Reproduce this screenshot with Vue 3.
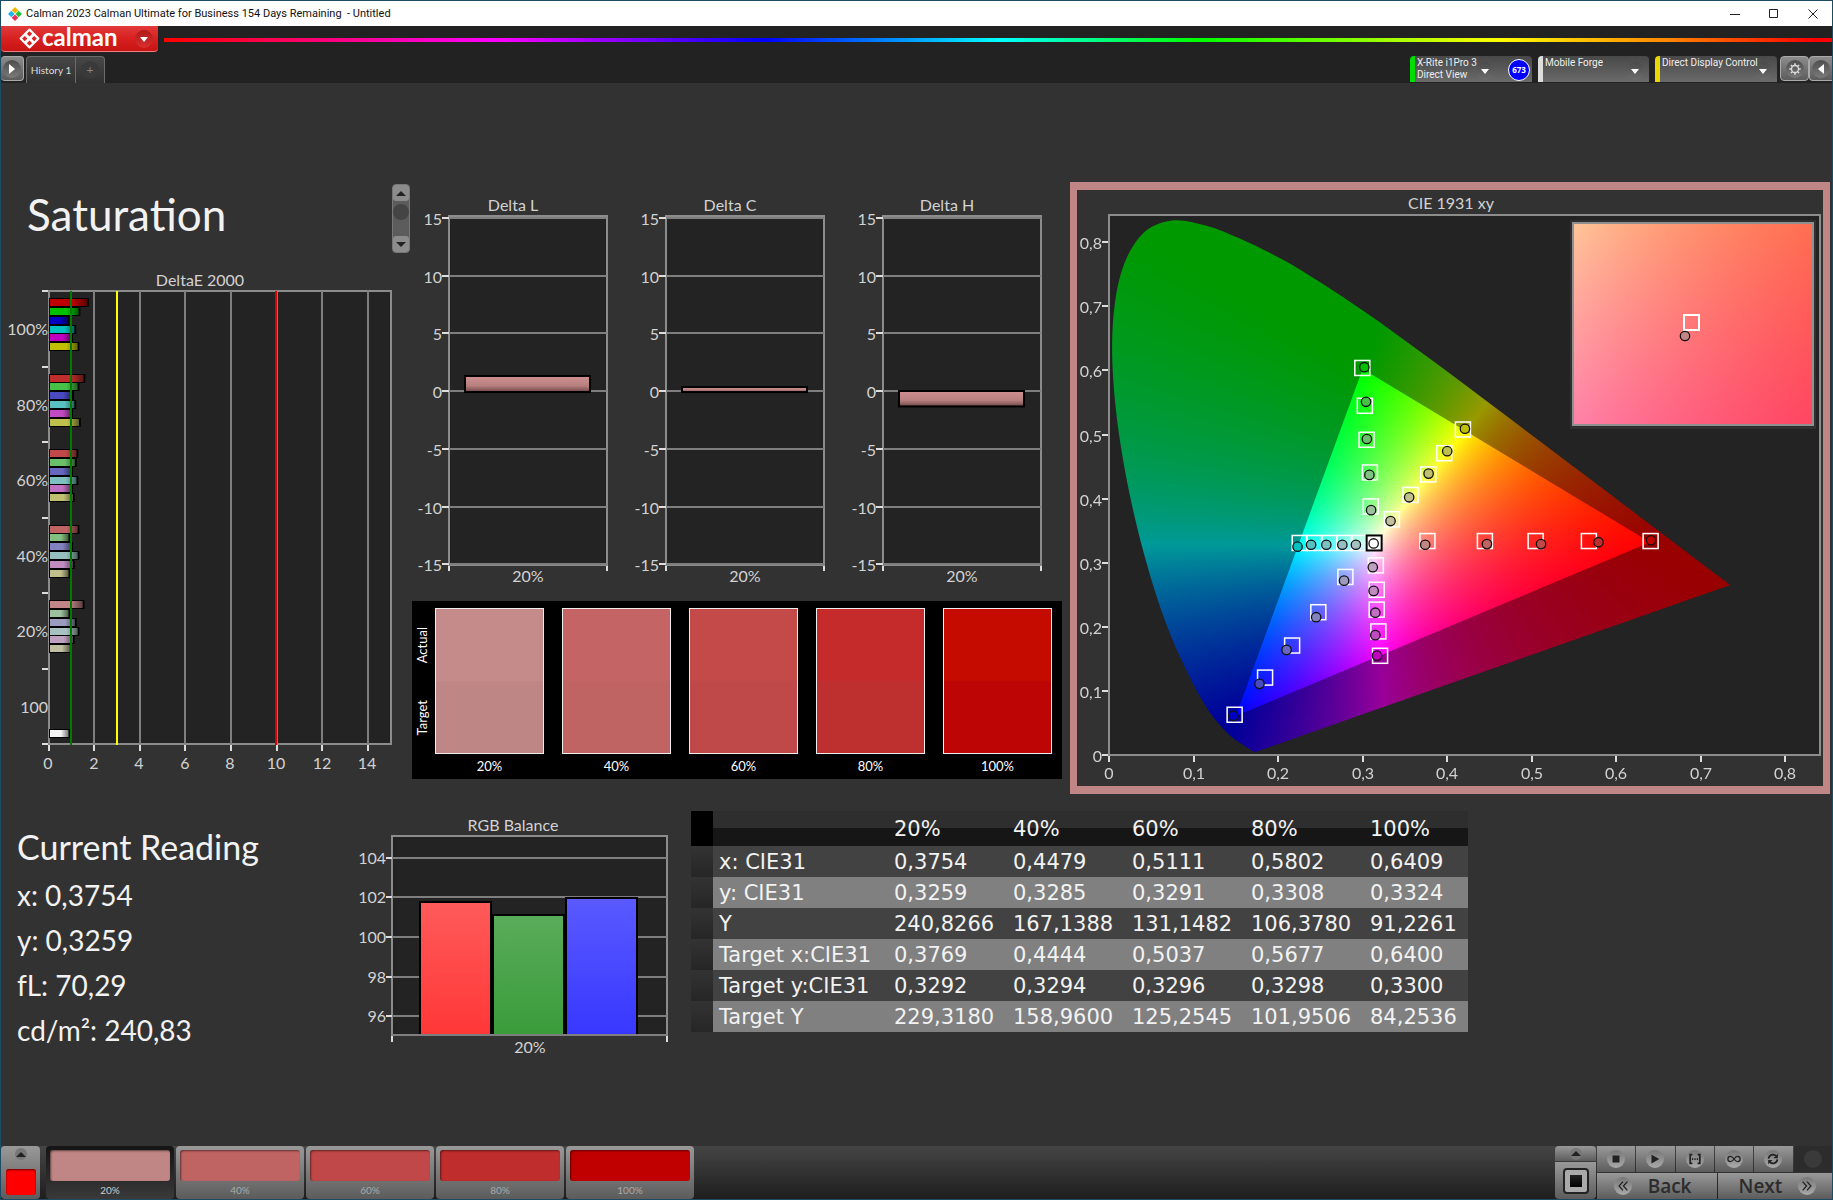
<script setup>
import { onMounted, ref } from 'vue'

const levels = ['20%', '40%', '60%', '80%', '100%']
const masks = {
  red: [1, 0, 0],
  green: [0, 1, 0],
  blue: [0, 0, 1],
  cyan: [0, 1, 1],
  magenta: [1, 0, 1],
  yellow: [1, 1, 0],
}
/* value of the unlit channels at each saturation level */
const lows = {
  red: [133, 99, 72, 45, 0],
  green: [155, 130, 105, 70, 0],
  blue: [155, 130, 103, 73, 0],
  cyan: [167, 150, 125, 88, 0],
  magenta: [160, 140, 112, 75, 0],
  yellow: [160, 138, 112, 78, 0],
}
const hues = ['red', 'green', 'blue', 'cyan', 'magenta', 'yellow']

function shade(hue, level) {
  const rgb = masks[hue].map((on) => (on ? 192 : lows[hue][levels.indexOf(level)]))
  return `rgb(${rgb.join(',')})`
}

const swatches = [
  { label: '20%', actual: '#c58a8a', target: '#bf8686' },
  { label: '40%', actual: '#c46464', target: '#bf6363' },
  { label: '60%', actual: '#c44949', target: '#bf4949' },
  { label: '80%', actual: '#c52b2b', target: '#be2f2f' },
  { label: '100%', actual: '#c50a00', target: '#bd0505' },
]

/* DeltaE 2000 chart */
const DE = { left: 48, top: 21, unit: 22.8, pitch: 75.5 }
const deltaE = [
  { label: '100%', values: [1.7, 1.33, 0.86, 1.15, 1.01, 1.29] },
  { label: '80%', values: [1.55, 1.29, 1.05, 1.15, 1.01, 1.35] },
  { label: '60%', values: [1.24, 1.17, 1.01, 1.24, 1.01, 1.08] },
  { label: '40%', values: [1.29, 0.89, 1.01, 1.29, 1.08, 0.89] },
  { label: '20%', values: [1.51, 0.89, 1.17, 1.29, 1.08, 0.95] },
]
const deBars = deltaE.flatMap((g, gi) =>
  g.values.map((v, i) => ({
    y: Math.round(DE.top + gi * DE.pitch + 8 + i * 8.85),
    w: v * DE.unit,
    fill: shade(hues[i], g.label),
  })),
)
deBars.push({ y: 460, w: 0.89 * DE.unit, fill: '#f4f4f4' })
const deLabels = [...deltaE.map((g) => g.label), '100']

/* Delta L / C / H charts */
const deltaCharts = [
  { title: 'Delta L', value: 1.3 },
  { title: 'Delta C', value: 0.35 },
  { title: 'Delta H', value: -1.25 },
]
const deltaTicks = [15, 10, 5, 0, -5, -10, -15]
const dy = (v) => Math.round(209 - v * 11.55)

/* RGB balance chart */
const balance = [
  { x: 70, h: 133, fill: 'url(#balRed)' },
  { x: 143, h: 120, fill: 'url(#balGreen)' },
  { x: 216, h: 137, fill: 'url(#balBlue)' },
]
const by = (v) => Math.round(126 - (v - 100) * 19.8)

/* CIE chart */
const CX = (x) => 32 + x * 845.5
const CY = (y) => 565 - y * 641
const cieTicks = [0, 1, 2, 3, 4, 5, 6, 7, 8]
const tickLabel = (t) => (t ? `0,${t}` : '0')
const targets = [
  [0.299, 0.603], [0.302, 0.544], [0.304, 0.491], [0.308, 0.44], [0.309, 0.387],
  [0.418, 0.507], [0.396, 0.47], [0.377, 0.437], [0.356, 0.405], [0.334, 0.367],
  [0.376, 0.333], [0.444, 0.333], [0.504, 0.333], [0.567, 0.333], [0.64, 0.333],
  [0.225, 0.33], [0.242, 0.33], [0.26, 0.33], [0.278, 0.33], [0.295, 0.33],
  [0.315, 0.295], [0.316, 0.257], [0.316, 0.226], [0.318, 0.192], [0.32, 0.154],
  [0.279, 0.277], [0.247, 0.222], [0.216, 0.17], [0.184, 0.12], [0.148, 0.062],
]
const measured = {
  green: [[0.31, 0.382], [0.308, 0.437], [0.305, 0.493], [0.304, 0.551], [0.302, 0.605]],
  yellow: [[0.333, 0.365], [0.355, 0.402], [0.378, 0.439], [0.4, 0.474], [0.421, 0.509]],
  red: [[0.374, 0.328], [0.447, 0.329], [0.511, 0.329], [0.579, 0.332], [0.641, 0.335]],
  cyan: [[0.292, 0.328], [0.276, 0.328], [0.257, 0.328], [0.239, 0.328], [0.223, 0.325]],
  magenta: [[0.312, 0.293], [0.313, 0.256], [0.315, 0.222], [0.315, 0.187], [0.317, 0.155]],
  blue: [[0.278, 0.272], [0.245, 0.215], [0.21, 0.164], [0.178, 0.111], [0.147, 0.061]],
}
const readings = Object.entries(measured).flatMap(([hue, pts]) =>
  pts.map(([x, y], i) => ({ x, y, fill: shade(hue, levels[i]) })),
)

const locus = [
  [0.1741, 0.005], [0.1714, 0.0051], [0.1689, 0.0069], [0.1644, 0.0109], [0.1566, 0.0177],
  [0.144, 0.0297], [0.1241, 0.0578], [0.1096, 0.0868], [0.0913, 0.1327], [0.0687, 0.2007],
  [0.0454, 0.295], [0.0235, 0.4127], [0.0082, 0.5384], [0.0039, 0.6548], [0.0139, 0.7502],
  [0.0389, 0.812], [0.0743, 0.8338], [0.1142, 0.8262], [0.1547, 0.8059], [0.1929, 0.7816],
  [0.2296, 0.7543], [0.3016, 0.6923], [0.3731, 0.6245], [0.4441, 0.5547], [0.5125, 0.4866],
  [0.5752, 0.4242], [0.627, 0.3725], [0.6658, 0.334], [0.6915, 0.3083], [0.719, 0.2809],
  [0.7347, 0.2653],
]
const gamut = [[0.64, 0.332], [0.3, 0.602], [0.15, 0.061]]

const cieCanvas = ref(null)
const insetCanvas = ref(null)

function chroma(x, y, gain) {
  const yy = Math.max(y, 0.001)
  const X = x / yy
  const Z = (1 - x - y) / yy
  const rgb = [
    3.2406 * X - 1.5372 - 0.4986 * Z,
    -0.9689 * X + 1.8758 + 0.0415 * Z,
    0.0557 * X - 0.204 + 1.057 * Z,
  ].map((c) => Math.max(c, 0))
  const peak = Math.max(...rgb, 0.0001)
  return rgb.map((c) => (c / peak) * 255 * gain)
}

function field(w, h, toXY, gain) {
  const layer = document.createElement('canvas')
  layer.width = w
  layer.height = h
  const ctx = layer.getContext('2d')
  const img = ctx.createImageData(w, h)
  for (let j = 0; j < h; j++) {
    for (let i = 0; i < w; i++) {
      const [x, y] = toXY(i, j)
      const [r, g, b] = chroma(x, y, gain)
      const o = (j * w + i) * 4
      img.data[o] = r
      img.data[o + 1] = g
      img.data[o + 2] = b
      img.data[o + 3] = 255
    }
  }
  ctx.putImageData(img, 0, 0)
  return layer
}

onMounted(() => {
  const c = cieCanvas.value
  const ctx = c.getContext('2d')
  const px = ([x, y]) => [x * 845.5, c.height - y * 641]
  const toXY = (i, j) => [i / 845.5, (c.height - j) / 641]

  ctx.save()
  ctx.beginPath()
  const pts = locus.map(px)
  ctx.moveTo(...pts[0])
  for (let i = 0; i < pts.length - 1; i++) {
    const p0 = pts[Math.max(i - 1, 0)]
    const p1 = pts[i]
    const p2 = pts[i + 1]
    const p3 = pts[Math.min(i + 2, pts.length - 1)]
    ctx.bezierCurveTo(
      p1[0] + (p2[0] - p0[0]) / 6, p1[1] + (p2[1] - p0[1]) / 6,
      p2[0] - (p3[0] - p1[0]) / 6, p2[1] - (p3[1] - p1[1]) / 6,
      p2[0], p2[1],
    )
  }
  ctx.closePath()
  ctx.clip()
  ctx.drawImage(field(c.width, c.height, toXY, 0.6), 0, 0)
  ctx.restore()

  ctx.save()
  ctx.beginPath()
  gamut.map(px).forEach((p, i) => (i ? ctx.lineTo(...p) : ctx.moveTo(...p)))
  ctx.closePath()
  ctx.clip()
  ctx.drawImage(field(c.width, c.height, toXY, 1), 0, 0)
  ctx.restore()

  const n = insetCanvas.value
  const near = (i, j) => [
    0.3769 + (i - n.width / 2) / 4200,
    0.3292 - (j - n.height / 2) / 4100,
  ]
  n.getContext('2d').drawImage(field(n.width, n.height, near, 1), 0, 0)
})

const tableRows = [
  ['x: CIE31', '0,3754', '0,4479', '0,5111', '0,5802', '0,6409'],
  ['y: CIE31', '0,3259', '0,3285', '0,3291', '0,3308', '0,3324'],
  ['Y', '240,8266', '167,1388', '131,1482', '106,3780', '91,2261'],
  ['Target x:CIE31', '0,3769', '0,4444', '0,5037', '0,5677', '0,6400'],
  ['Target y:CIE31', '0,3292', '0,3294', '0,3296', '0,3298', '0,3300'],
  ['Target Y', '229,3180', '158,9600', '125,2545', '101,9506', '84,2536'],
]
const current = ['x: 0,3754', 'y: 0,3259', 'fL: 70,29', 'cd/m²: 240,83']
</script>

<template>
  <div class="window">
    <header class="titlebar">
      <svg class="app-icon" viewBox="0 0 14 14" aria-hidden="true">
        <path d="M7 0l3.300 3.300L7 6.600 3.700 3.300z" fill="#f7b500" />
        <path d="M3.300 3.700L6.600 7l-3.300 3.300L0 7z" fill="#18b7e8" />
        <path d="M10.700 3.700L14 7l-3.300 3.300L7.400 7z" fill="#1fc23a" />
        <path d="M7 7.400l3.300 3.300L7 14l-3.300-3.300z" fill="#ee2b5b" />
      </svg>
      <h1>Calman 2023 Calman Ultimate for Business 154 Days Remaining&nbsp; - Untitled</h1>
      <div class="controls">
        <button aria-label="Minimize"><svg viewBox="0 0 10 10"><path d="M0 5.500h10" /></svg></button>
        <button aria-label="Maximize"><svg viewBox="0 0 10 10"><path d="M.5.5h8v8h-8z" /></svg></button>
        <button aria-label="Close"><svg viewBox="0 0 10 10"><path d="M.5.5l9 9m0-9l-9 9" /></svg></button>
      </div>
    </header>

    <div class="brandbar">
      <button class="brand">
        <svg class="mark" viewBox="0 0 20 20" aria-hidden="true">
          <path d="M10 1.500L18.500 10 10 18.500 1.500 10z" fill="#fff" stroke="#fff" stroke-width="2" stroke-linejoin="round" />
          <g fill="#d22">
            <path d="M10 3l2.500 2.500L10 8 7.500 5.500z" />
            <path d="M5.500 7.500L8 10l-2.500 2.500L3 10z" />
            <path d="M14.500 7.500L17 10l-2.500 2.500L12 10z" />
            <path d="M10 12l2.500 2.500L10 17l-2.500-2.500z" />
          </g>
        </svg>
        <span>calman</span>
        <i class="drop red"></i>
      </button>
      <div class="rainbow"></div>
    </div>

    <nav class="tabs">
      <button class="square" aria-label="Expand"><i class="knob"><b class="tri right"></b></i></button>
      <button class="tab">History 1</button>
      <button class="tab add" aria-label="Add history"><i class="knob dim">+</i></button>
      <div class="devices">
        <div class="device meter">
          <span>X-Rite i1Pro 3<br />Direct View</span>
          <button class="drop" aria-label="Meter menu"></button>
          <em>673</em>
        </div>
        <div class="device source">
          <span>Mobile Forge</span>
          <button class="drop" aria-label="Source menu"></button>
        </div>
        <div class="device display">
          <span>Direct Display Control</span>
          <button class="drop" aria-label="Display menu"></button>
        </div>
        <button class="square gear" aria-label="Settings">
          <i class="knob">
            <svg viewBox="0 0 16 16"><circle cx="8" cy="8" r="4" fill="none" stroke="#ddd" stroke-width="1.500" /><path d="M8 1.500v2M8 12.500v2M1.500 8h2M12.500 8h2M3.400 3.400l1.400 1.400M11.200 11.200l1.400 1.400M3.400 12.600l1.400-1.400M11.200 4.800l1.400-1.400" stroke="#ddd" stroke-width="1.800" /></svg>
          </i>
        </button>
        <button class="square last" aria-label="Collapse"><i class="knob"><b class="tri left"></b></i></button>
      </div>
    </nav>

    <main>
      <section class="upper">
        <div class="col-a">
          <div class="heading">
            <h2>Saturation</h2>
            <div class="scroller">
              <button aria-label="Scroll up"><b class="tri up"></b></button>
              <i></i>
              <button aria-label="Scroll down"><b class="tri down"></b></button>
            </div>
          </div>
          <svg class="chart" viewBox="0 0 411 512">
            <defs>
              <linearGradient id="barFade"><stop offset="0.6" stop-opacity="0" /><stop offset="1" stop-opacity="0.5" /></linearGradient>
            </defs>
            <text x="199" y="16" text-anchor="middle">DeltaE 2000</text>
            <rect class="plot" :x="DE.left" :y="DE.top" width="342" height="453" />
            <path v-for="t in 7" :key="t" class="grid" :d="`M${Math.floor(DE.left + t * 45.6)} 21V474`" />
            <path v-for="t in 8" :key="'x' + t" class="tick" :d="`M${Math.floor(DE.left + (t - 1) * 45.6)} 475v6`" />
            <path v-for="t in 7" :key="'y' + t" class="tick" :d="`M41 ${Math.round(DE.top + (t - 1) * DE.pitch)}h6`" />
            <g v-for="(b, i) in deBars" :key="i">
              <rect x="48" :y="b.y - 1" :width="b.w + 1" height="9" fill="#000" />
              <rect x="49" :y="b.y" :width="b.w - 2" height="7" :fill="b.fill" />
              <rect x="49" :y="b.y" :width="b.w - 2" height="7" fill="url(#barFade)" />
            </g>
            <path d="M70 21V475" stroke="#007a00" stroke-width="2" />
            <path d="M116 21V475" stroke="#ff0" stroke-width="2" />
            <path d="M275 21V475" stroke="#e00000" stroke-width="2" />
            <text v-for="(l, i) in deLabels" :key="'l' + i" x="47" :y="Math.round(65 + i * DE.pitch)" text-anchor="end">{{ l }}</text>
            <text v-for="t in 8" :key="'n' + t" :x="Math.round(47 + (t - 1) * 45.6)" y="499" text-anchor="middle">{{ (t - 1) * 2 }}</text>
          </svg>
        </div>

        <div class="col-b">
          <div class="deltas">
            <svg v-for="c in deltaCharts" :key="c.title" class="chart" viewBox="0 0 217 419">
              <defs>
                <linearGradient id="pinkFade" x2="0" y2="1"><stop offset="0" stop-color="#cf9090" /><stop offset="0.6" stop-color="#b98080" /><stop offset="1" stop-color="#6d4646" /></linearGradient>
              </defs>
              <text x="101" y="29" text-anchor="middle">{{ c.title }}</text>
              <rect class="plot" x="37" y="34" width="158" height="349" />
              <path v-for="t in deltaTicks" :key="t" class="grid" :d="`M37 ${dy(t)}H195`" />
              <path v-for="t in deltaTicks" :key="'t' + t" class="tick" :d="`M30 ${dy(t)}h7`" />
              <path class="tick" d="M37 384v5M195 384v5" />
              <rect x="53" :y="dy(Math.max(c.value, 0))" width="125" :height="Math.abs(c.value) * 11.55 + 1" fill="url(#pinkFade)" stroke="#000" stroke-width="2" />
              <text v-for="t in deltaTicks" :key="'l' + t" x="30" :y="dy(t) + 7" text-anchor="end">{{ t }}</text>
              <text x="116" y="400" text-anchor="middle">20%</text>
            </svg>
          </div>
          <div class="swatches">
            <div class="side"><span>Actual</span><span>Target</span></div>
            <figure v-for="s in swatches" :key="s.label">
              <div class="patch"><i :style="{ background: s.actual }"></i><i :style="{ background: s.target }"></i></div>
              <figcaption>{{ s.label }}</figcaption>
            </figure>
          </div>
        </div>

        <div class="cie">
          <svg class="chart" viewBox="0 0 746 596">
            <text x="374" y="19" text-anchor="middle">CIE 1931 xy</text>
            <rect class="plot" x="32" y="25" width="711" height="540" />
            <foreignObject x="32" y="25" width="711" height="540">
              <canvas ref="cieCanvas" width="711" height="540"></canvas>
            </foreignObject>
            <rect x="32" y="25" width="711" height="540" fill="none" stroke="#8c8c8c" stroke-width="2" />
            <path v-for="t in cieTicks" :key="t" class="tick" :d="`M${Math.round(CX(t / 10))} 566v6M25 ${Math.round(CY(t / 10))}h6`" />
            <text v-for="t in cieTicks" :key="'x' + t" :x="Math.round(CX(t / 10))" y="589" text-anchor="middle">{{ tickLabel(t) }}</text>
            <text v-for="t in cieTicks" :key="'y' + t" x="25" :y="Math.round(CY(t / 10)) + 7" text-anchor="end">{{ tickLabel(t) }}</text>
            <rect v-for="(p, i) in targets" :key="'s' + i" :x="CX(p[0]) - 7" :y="CY(p[1]) - 8" width="15" height="15" fill="none" stroke="#fff" stroke-width="1.500" />
            <circle v-for="(p, i) in readings" :key="'c' + i" :cx="CX(p.x)" :cy="CY(p.y)" r="4.700" :fill="p.fill" stroke="#111" stroke-width="1.300" />
            <rect :x="CX(0.313) - 7" :y="CY(0.33) - 8" width="15" height="15" fill="#fff" stroke="#000" stroke-width="2" />
            <circle :cx="CX(0.313)" :cy="CY(0.33)" r="4.700" fill="#fff" stroke="#111" stroke-width="1.300" />
            <rect x="493" y="30" width="246" height="209" fill="#303030" />
            <foreignObject x="496" y="33" width="240" height="202">
              <canvas ref="insetCanvas" width="240" height="202"></canvas>
            </foreignObject>
            <rect x="496" y="33" width="240" height="202" fill="none" stroke="#909090" stroke-width="2" />
            <rect x="607" y="125" width="15" height="15" fill="none" stroke="#fff" stroke-width="2" />
            <circle cx="608" cy="146" r="4.700" fill="#c08585" stroke="#111" stroke-width="1.300" />
          </svg>
        </div>
      </section>

      <section class="lower">
        <div class="reading">
          <h3>Current Reading</h3>
          <p v-for="r in current" :key="r">{{ r }}</p>
        </div>
        <svg class="chart" viewBox="0 0 341 250">
          <defs>
            <linearGradient id="balRed" x2="0" y2="1"><stop offset="0" stop-color="#ff5a5a" /><stop offset="1" stop-color="#ff3737" /></linearGradient>
            <linearGradient id="balGreen" x2="0" y2="1"><stop offset="0" stop-color="#5aac5a" /><stop offset="1" stop-color="#3a9c3a" /></linearGradient>
            <linearGradient id="balBlue" x2="0" y2="1"><stop offset="0" stop-color="#5a5aff" /><stop offset="1" stop-color="#3737ff" /></linearGradient>
          </defs>
          <text x="163" y="20" text-anchor="middle">RGB Balance</text>
          <rect class="plot" x="42" y="25" width="275" height="199" />
          <path v-for="t in [104, 102, 100, 98, 96]" :key="t" class="grid" :d="`M42 ${by(t)}H317`" />
          <path v-for="t in [104, 102, 100, 98, 96]" :key="'t' + t" class="tick" :d="`M36 ${by(t)}h6`" />
          <rect v-for="b in balance" :key="b.x" :x="b.x" :y="224 - b.h" width="71" :height="b.h" :fill="b.fill" stroke="#000" stroke-width="2" />
          <path class="grid" d="M42 224H317" />
          <path class="tick" d="M42 225v6M317 225v6" />
          <text v-for="t in [104, 102, 100, 98, 96]" :key="'l' + t" x="36" :y="by(t) + 6" text-anchor="end">{{ t }}</text>
          <text x="180" y="242" text-anchor="middle">20%</text>
        </svg>
        <table>
          <colgroup><col class="c-gutter" /><col class="c-name" /><col v-for="n in 4" :key="n" class="c-value" /><col /></colgroup>
          <thead>
            <tr><td class="gutter"></td><td></td><th v-for="l in levels" :key="l" scope="col">{{ l }}</th></tr>
          </thead>
          <tbody>
            <tr v-for="r in tableRows" :key="r[0]">
              <td class="gutter"></td>
              <th scope="row">{{ r[0] }}</th>
              <td v-for="(v, i) in r.slice(1)" :key="i">{{ v }}</td>
            </tr>
          </tbody>
        </table>
      </section>
    </main>

    <footer>
      <button class="current" aria-label="Current color"><i class="mini"><b class="tri up"></b></i><span></span></button>
      <div class="steps">
        <button v-for="(l, i) in levels" :key="l" :class="{ active: i === 0 }">
          <i :style="{ background: shade('red', l) }"></i>{{ l }}
        </button>
      </div>
      <div class="halt">
        <button aria-label="Show options"><i class="mini"><b class="tri up"></b></i></button>
        <button class="big" aria-label="Pattern"><span></span></button>
      </div>
      <div class="transport">
        <div class="row">
          <button aria-label="Stop"><i class="knob"><svg viewBox="0 0 16 16"><path d="M4 4h8v8H4z" /></svg></i></button>
          <button aria-label="Play"><i class="knob"><svg viewBox="0 0 16 16"><path d="M4 3l9 5-9 5z" /></svg></i></button>
          <button aria-label="Read series"><i class="knob"><svg viewBox="0 0 16 16"><path class="line thick" d="M5 3H2.500v10H5M11 3h2.500v10H11M4.500 8H6M7.300 8h1.500M10 8h1.500" /></svg></i></button>
          <button aria-label="Continuous"><i class="knob"><svg viewBox="0 0 16 16"><path class="line" d="M8 8C6.500 5.800 5.500 5 4 5a3 3 0 000 6C5.500 11 6.500 10.200 8 8s2.500-3 4-3a3 3 0 010 6C10.500 11 9.500 10.200 8 8z" /></svg></i></button>
          <button aria-label="Refresh"><i class="knob"><svg viewBox="0 0 16 16"><path class="line thick" d="M3 7.500A5 5 0 0111.500 4.500M13 8.500A5 5 0 014.500 11.500" /><path d="M13.500 2v5H8.500zM2.500 14V9h5z" /></svg></i></button>
          <button class="off" aria-label="Record" disabled><i class="knob"></i></button>
        </div>
        <div class="row nav">
          <button><i class="knob"><svg viewBox="0 0 16 16"><path class="line" d="M8 3L3.500 8 8 13M13 3L8.500 8l4.500 5" /></svg></i>Back</button>
          <button>Next<i class="knob"><svg viewBox="0 0 16 16"><path class="line" d="M8 3l4.500 5L8 13M3 3l4.500 5L3 13" /></svg></i></button>
        </div>
      </div>
    </footer>
  </div>
</template>

<style>
body {
  margin: 0;
  background: #323232;
}
</style>

<style scoped>
* {
  box-sizing: border-box;
}
button {
  border: 0;
  padding: 0;
  margin: 0;
  background: none;
  color: inherit;
  font: inherit;
  cursor: pointer;
}
h1, h2, h3, p, figure {
  margin: 0;
  font-weight: 400;
}
i, em {
  font-style: normal;
}
.window {
  display: flex;
  flex-direction: column;
  min-height: 100vh;
  background: #323232;
  border: 1px solid #1f4a63;
  color: #f2f2f2;
  font-family: Lato, "Liberation Sans", sans-serif;
}

.titlebar {
  display: flex;
  align-items: center;
  height: 25px;
  padding: 0 14px 0 7px;
  background: #fff;
  color: #111;
}
.titlebar h1 {
  font: 11px/16px Roboto, Lato, sans-serif;
}
.app-icon {
  width: 14px;
  height: 14px;
  margin-right: 4px;
}
.controls {
  display: flex;
  gap: 29px;
  margin-left: auto;
}
.controls svg {
  display: block;
  width: 10px;
  height: 10px;
  fill: none;
  stroke: #222;
}

.brandbar {
  display: flex;
  gap: 6px;
  height: 30px;
  background: #222;
}
.brand {
  display: flex;
  align-items: center;
  width: 157px;
  height: 26px;
  padding: 0 5px 0 18px;
  border-radius: 0 0 4px 4px;
  border-bottom: 1px solid #f08080;
  background: linear-gradient(#e23a3a, #d82020 50%, #c81414);
  color: #fff;
}
.brand span {
  flex: 1;
  font: 700 24px/24px Lato, sans-serif;
  text-align: left;
  margin: -3px 0 0 2px;
}
.mark {
  width: 21px;
  height: 21px;
}
.rainbow {
  flex: 1;
  height: 4px;
  margin-top: 12px;
  background: linear-gradient(90deg, #f00, #f0f 20%, #00f 36%, #0ff 50%, #0f0 62%, #ff0 80%, #f80 90%, #f00 99%);
}

.drop {
  position: relative;
  flex: none;
  width: 18px;
  height: 18px;
  border-radius: 50%;
  background: linear-gradient(#4a4a4a, #6c6c6c);
}
.drop.red {
  background: linear-gradient(#b01818, #d83030);
}
.drop::after {
  content: "";
  position: absolute;
  left: 5px;
  top: 7px;
  border: 4px solid transparent;
  border-top: 5px solid #fff;
  border-bottom: 0;
}

.tabs {
  display: flex;
  height: 27px;
  background: #222;
  font-size: 11px;
  line-height: 12px;
}
.square {
  display: grid;
  place-items: center;
  width: 23px;
  height: 25px;
  border: 1px solid #aaa;
  border-radius: 4px;
  background: linear-gradient(#8c8c8c, #5c5c5c);
}
.tabs > .square {
  border-left: 0;
  margin-right: 2px;
}
.knob {
  display: grid;
  place-items: center;
  width: 18px;
  height: 18px;
  border-radius: 50%;
  background: linear-gradient(#4e4e4e, #7a7a7a);
}
.knob svg {
  width: 14px;
  height: 14px;
}
.knob.dim {
  background: #3a3a3a;
  color: #888;
  font-size: 12px;
}
.tri {
  width: 0;
  height: 0;
  border: 5px solid transparent;
}
.tri.right {
  border-left: 6px solid #fff;
  border-right: 0;
}
.tri.left {
  border-right: 6px solid #fff;
  border-left: 0;
}
.tri.up {
  border-bottom: 5px solid #222;
  border-top: 0;
}
.tri.down {
  border-top: 5px solid #222;
  border-bottom: 0;
}
.tab {
  display: grid;
  place-items: center;
  width: 50px;
  border: 1px solid #6c6c6c;
  border-bottom: 0;
  border-radius: 4px 0 0 0;
  background: linear-gradient(#484848, #303030);
  color: #ddd;
  font-size: 10px;
}
.tab.add {
  width: 29px;
  border-left: 0;
  border-radius: 0 4px 0 0;
}
.devices {
  display: flex;
  margin-left: auto;
}
.device {
  display: flex;
  height: 26px;
  padding: 1px 0 0 2px;
  border-left: 5px solid;
  border-radius: 4px 4px 0 0;
  background: linear-gradient(#484848, #6a6a6a);
  color: #eee;
  font: 10px/12px Roboto, Lato, sans-serif;
}
.device span {
  position: relative;
  z-index: 1;
  flex: 1;
  min-width: 0;
  white-space: nowrap;
}
.device .drop {
  margin: 5px 5px 0 0;
}
.meter {
  width: 122px;
  border-color: #0d0;
  margin-right: 6px;
}
.meter em {
  align-self: center;
  width: 22px;
  height: 22px;
  margin: 0 2px 0 9px;
  border: 1px solid #fff;
  border-radius: 50%;
  background: #00f;
  color: #fff;
  font: 700 8px/20px "Open Sans", sans-serif;
  text-align: center;
}
.source {
  width: 111px;
  border-color: #ddd;
  margin-right: 6px;
}
.display {
  width: 122px;
  border-color: #e8d800;
  margin-right: 3px;
}
.gear {
  width: 29px;
}
.last {
  width: 23px;
  border-right: 0;
  border-radius: 4px 0 0 4px;
}

main {
  display: flex;
  flex-direction: column;
  gap: 17px;
  padding: 99px 0 24px;
}
.chart {
  display: block;
  width: 100%;
  height: auto;
}
.chart text {
  fill: #d2d2d2;
  font-size: 16px;
}
.chart canvas {
  display: block;
}
.plot {
  fill: #232323;
  stroke: #8c8c8c;
  stroke-width: 2px;
}
.grid {
  fill: none;
  stroke: #7e7e7e;
  stroke-width: 2px;
}
.tick {
  fill: none;
  stroke: #ddd;
  stroke-width: 2px;
}

.upper {
  display: grid;
  grid-template-columns: 411fr 651fr 769fr;
  align-items: start;
}
.heading {
  display: flex;
  justify-content: space-between;
  height: 88px;
  padding: 2px 2px 0 26px;
}
.heading h2 {
  font-size: 44px;
  line-height: 60px;
}
.scroller {
  display: flex;
  flex-direction: column;
  justify-content: space-between;
  width: 18px;
  height: 69px;
  border: 1px solid #777;
  border-radius: 4px;
  background: #5c5c5c;
}
.scroller button {
  display: grid;
  place-items: center;
  height: 16px;
  border-radius: 3px;
  background: #8c8c8c;
}
.scroller i {
  width: 16px;
  height: 16px;
  margin-bottom: 14px;
  border-radius: 50%;
  background: #444;
}
.deltas {
  display: grid;
  grid-template-columns: repeat(3, 1fr);
}
.swatches {
  display: flex;
  gap: 18px;
  height: 178px;
  padding: 7px 10px 0 2px;
  margin-right: 1px;
  background: #000;
  color: #fff;
  font-size: 13px;
  line-height: 16px;
}
.side {
  display: flex;
  flex-direction: column;
  justify-content: space-around;
  width: 21px;
  height: 146px;
  margin-right: -18px;
}
.side span {
  writing-mode: vertical-rl;
  transform: rotate(180deg);
  width: 16px;
}
.swatches figure {
  flex: 1;
}
.patch {
  display: flex;
  flex-direction: column;
  height: 146px;
  border: 1px solid #eee;
}
.patch i {
  flex: 1;
}
figcaption {
  margin-top: 4px;
  text-align: center;
}
.cie {
  margin: 0 2px 0 7px;
  border: 7px solid #c08585;
  border-top-width: 8px;
  border-bottom-width: 8px;
}

.lower {
  display: grid;
  grid-template-columns: 349fr 341fr 777fr 364fr;
  align-items: start;
}
.reading {
  padding: 14px 0 0 16px;
  font-size: 28px;
  line-height: 45px;
}
.reading h3 {
  font-size: 34px;
  line-height: 44px;
  margin-bottom: 4px;
}
table {
  width: 100%;
  table-layout: fixed;
  border-collapse: collapse;
  font: 21px/30px "DejaVu Sans", sans-serif;
}
th, td {
  height: 31px;
  padding: 1px 0 0 6px;
  font-weight: 400;
  text-align: left;
  white-space: nowrap;
}
.c-gutter {
  width: 22px;
}
.c-name {
  width: 175px;
}
.c-value {
  width: 119px;
}
thead tr {
  height: 35px;
  background: linear-gradient(#2e2e2e 50%, #161616 50%);
}
thead .gutter {
  background: #000;
}
tbody tr {
  background: #424242;
}
tbody tr:nth-child(even) {
  background: #808080;
}
tbody .gutter {
  background: linear-gradient(#333, #262626);
}

footer {
  display: flex;
  height: 53px;
  margin-top: auto;
  background: linear-gradient(#454545, #1e1e1e);
  color: #333;
}
footer button {
  background: linear-gradient(#999, #5c5c5c);
}
.mini {
  display: grid;
  place-items: center;
  width: 12px;
  height: 12px;
  border-radius: 50%;
  background: #777;
}
.current {
  display: flex;
  flex-direction: column;
  align-items: center;
  justify-content: space-between;
  width: 39px;
  margin-right: 6px;
  padding: 2px 0 4px;
  border-radius: 4px;
}
.current span {
  width: 30px;
  height: 26px;
  border-radius: 3px;
  background: #f00;
  box-shadow: inset 0 1px 2px #600;
}
.steps {
  display: flex;
  gap: 2px;
}
.steps button {
  width: 128px;
  padding: 4px;
  border-radius: 4px;
  color: #aaa;
  font-size: 10px;
  line-height: 14px;
}
.steps button i {
  display: block;
  height: 31px;
  border-radius: 3px;
  box-shadow: inset 1px 1px 2px rgba(0, 0, 0, 0.5);
  margin-bottom: 2px;
}
.steps .active {
  background: linear-gradient(#141414, #3a3a3a);
  color: #ccc;
}
.halt {
  display: flex;
  flex-direction: column;
  gap: 1px;
  width: 41px;
  margin-left: auto;
  margin-right: 1px;
}
.halt button {
  display: grid;
  place-items: center;
  height: 15px;
  border-radius: 4px 4px 0 0;
}
.halt .big {
  flex: 1;
  border-radius: 0 0 4px 4px;
}
.big span {
  width: 26px;
  height: 26px;
  border: 2px solid #222;
  border-radius: 4px;
  background: linear-gradient(#222, #000) center / 12px 12px no-repeat, #aaa;
}
.transport {
  display: flex;
  flex-direction: column;
  gap: 1px;
  width: 235px;
}
.row {
  display: flex;
  gap: 1px;
  height: 26px;
}
.row button {
  flex: 1;
  display: grid;
  place-items: center;
}
.row .off {
  background: #2c2c2c;
}
.row .knob {
  background: linear-gradient(#777, #aaa);
  fill: #222;
}
.row .off .knob {
  background: #3a3a3a;
}
.line {
  fill: none;
  stroke: #222;
  stroke-width: 1.5px;
}
.line.thick {
  stroke-width: 2px;
}
.nav button {
  display: flex;
  align-items: center;
  justify-content: space-between;
  padding: 0 25px 0 17px;
  font: 600 19px/26px "Open Sans", sans-serif;
  color: #2c2c2c;
}
.nav button:last-child {
  padding: 0 16px 0 21px;
}
</style>
